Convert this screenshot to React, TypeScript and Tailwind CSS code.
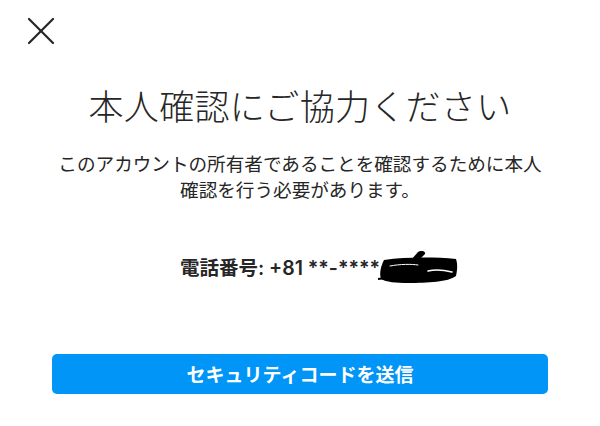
import { X } from 'lucide-react';

export default function App() {
  return (
    <main
      className="flex h-[426px] w-[600px] flex-col bg-white text-[#262626]"
      style={{ fontFamily: '"Noto Sans CJK JP", "Noto Sans", sans-serif' }}
    >
      <div className="px-[17px] pt-[7px]">
        <X className="size-[48px] text-[#262626]" strokeWidth={1.1} />
      </div>

      <h1 className="mt-[30px] text-center text-[35px] font-light leading-[40px] tracking-[0.3px]">
        本人確認にご協力ください
      </h1>

      <p className="mt-[25px] px-[40px] text-center text-[18.6px] leading-[26px]">
        このアカウントの所有者であることを確認するために本人
        <br />
        確認を行う必要があります。
      </p>

      <div className="mt-[48px] flex items-center justify-center pl-[38px]">
        <span
          className="text-[19.5px] font-semibold leading-[26px]"
          style={{ fontFamily: 'Inter, "Noto Sans CJK JP", sans-serif' }}
        >
          電話番号: +81 **-****
        </span>
        <svg width="80" height="34" viewBox="0 0 80 34" className="-ml-[2px] mt-[1px]" aria-hidden="true">
          <path
            d="M6 9 C28 6 56 6 78 8 C80 14 79 20 78 25 C70 31 50 32 30 32 C18 32 8 31 3 28 C1 22 3 15 6 9 Z"
            fill="#000"
          />
          <path d="M40 1 C43 -1 48 0 47 3 L40 10 L33 9 Z" fill="#000" />
          <path d="M0 28 L8 27" stroke="#000" strokeWidth="2" strokeLinecap="round" />
          <path d="M12 15 C22 13 34 13 40 14" stroke="#fff" strokeWidth="1" fill="none" strokeLinecap="round" />
          <path d="M50 20 C58 18 66 19 74 21" stroke="#fff" strokeWidth="1.5" fill="none" strokeLinecap="round" />
        </svg>
      </div>

      <div className="mt-[69px] px-[52px]">
        <button className="flex h-[40px] w-full items-center justify-center rounded-[5px] bg-[#0095f6] text-[19px] font-semibold text-white">
          セキュリティコードを送信
        </button>
      </div>
    </main>
  );
}
